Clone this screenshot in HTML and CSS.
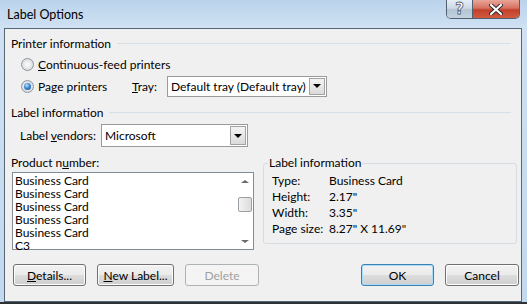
FILE: index.html
```html
<!DOCTYPE html>
<html lang="en">
<head>
  <meta charset="UTF-8" />
  <title>Label Options</title>
  <link rel="stylesheet" href="styles.css">
</head>
<body>
  <div class="window">
    <div class="titlebar">
      <span class="title">Label Options</span>
      <div class="caption">
        <span class="cap-btn help">?</span>
        <span class="cap-btn close">
          <svg width="14" height="11" viewBox="0 0 14 11">
            <path d="M2 1 L12 10 M12 1 L2 10" stroke="#2b2b2b" stroke-width="4" stroke-linecap="round"/>
            <path d="M2 1 L12 10 M12 1 L2 10" stroke="#ffffff" stroke-width="2.2" stroke-linecap="round"/>
          </svg>
        </span>
      </div>
    </div>

    <div class="client">
      <div class="group-head"><span>Printer information</span><i class="rule"></i></div>

      <div class="radio-row first">
        <span class="radio"></span>
        <span><u>C</u>ontinuous-feed printers</span>
      </div>
      <div class="radio-row second">
        <div class="radio-opt">
          <span class="radio checked"></span>
          <span>Pa<u>g</u>e printers</span>
        </div>
        <span class="tray-label"><u>T</u>ray:</span>
        <div class="select tray">
          <span class="select-text">Default tray (Default tray)</span>
          <span class="drop"><i></i></span>
        </div>
      </div>

      <div class="group-head label-head"><span>Label information</span><i class="rule"></i></div>

      <div class="vendor-row">
        <span class="vendor-label">Label <u>v</u>endors:</span>
        <div class="select vendor">
          <span class="select-text">Microsoft</span>
          <span class="drop"><i></i></span>
        </div>
      </div>

      <div class="columns">
        <div class="product">
          <div class="product-label">Product n<u>u</u>mber:</div>
          <div class="listbox">
            <ul class="items">
              <li>Business Card</li>
              <li>Business Card</li>
              <li>Business Card</li>
              <li>Business Card</li>
              <li>Business Card</li>
              <li>C3</li>
            </ul>
            <div class="scrollbar">
              <span class="arrow up"></span>
              <span class="thumb"></span>
              <span class="arrow down"></span>
            </div>
          </div>
        </div>

        <fieldset class="info-box">
          <legend>Label information</legend>
          <table class="info">
            <tr><td>Type:</td><td>Business Card</td></tr>
            <tr><td>Height:</td><td>2.17"</td></tr>
            <tr><td>Width:</td><td>3.35"</td></tr>
            <tr><td>Page size:</td><td>8.27" X 11.69"</td></tr>
          </table>
        </fieldset>
      </div>

      <div class="buttons">
        <button class="btn details"><u>D</u>etails...</button>
        <button class="btn new-label"><u>N</u>ew Label...</button>
        <button class="btn delete" disabled>Delete</button>
        <span class="spacer"></span>
        <button class="btn ok">OK</button>
        <button class="btn cancel">Cancel</button>
      </div>
    </div>

    <div class="taskbar"></div>
  </div>
</body>
</html>
```

FILE: styles.css
```css
body {
  margin: 0;
  font-family: Lato, "Open Sans", sans-serif;
  font-size: 12px;
  line-height: 15px;
  color: #000;
}

u {
  text-decoration: underline;
  text-underline-offset: 1px;
}

.window {
  width: 527px;
  height: 304px;
  overflow: hidden;
  display: flex;
  flex-direction: column;
  background: linear-gradient(to bottom, #bad3eb 0%, #cfe1f3 9%, #c2d8ee 100%);
  white-space: nowrap;
}

/* title bar */
.titlebar {
  height: 28px;
  display: flex;
  align-items: flex-start;
  flex-shrink: 0;
}

.title {
  padding: 7px 0 0 7px;
  line-height: 16px;
  font-size: 12.5px;
}

.caption {
  margin-left: auto;
  margin-right: 7px;
  display: flex;
  height: 18px;
  border: 1px solid #50606f;
  border-top: none;
  border-radius: 0 0 5px 5px;
  overflow: hidden;
}

.cap-btn {
  display: flex;
  align-items: center;
  justify-content: center;
}

.help {
  width: 25px;
  border-right: 1px solid #50606f;
  background: linear-gradient(to bottom, #e6eef6 0%, #cdd9e5 45%, #b4c4d4 55%, #c4d2df 100%);
  color: #fff;
  font: bold 15px "DejaVu Sans", sans-serif;
  -webkit-text-stroke: 0.8px #55606a;
}

.close {
  width: 46px;
  background: linear-gradient(to bottom, #e7a69a 0%, #d6705f 45%, #c2412c 55%, #d25a40 100%);
}

/* client area */
.client {
  height: 265px;
  margin: 0 5px 0 4px;
  border: 1px solid #566778;
  background: #f0f0f0;
  padding: 7px 0 0 6px;
  display: flex;
  flex-direction: column;
  flex-shrink: 0;
}

.group-head {
  display: flex;
  align-items: center;
  gap: 6px;
  height: 15px;
  margin-right: 10px;
}

.rule {
  flex: 1;
  height: 1px;
  background: #d8e0e7;
}

.radio-row {
  display: flex;
  align-items: center;
  padding-left: 10px;
}

.radio-row.first {
  height: 20px;
  margin-top: 3px;
}

.radio-row.second {
  height: 22px;
  margin-top: 1px;
}

.radio-opt {
  display: flex;
  align-items: center;
  width: 111px;
}

.radio {
  width: 11px;
  height: 11px;
  border: 1px solid #8a98a4;
  border-radius: 50%;
  background: radial-gradient(circle at 50% 50%, #f6f6f6 20%, #dcdcdc 70%, #c9c9c9 100%);
  margin-right: 4px;
  position: relative;
  flex-shrink: 0;
}

.radio.checked::after {
  content: "";
  position: absolute;
  left: 2px;
  top: 2px;
  width: 7px;
  height: 7px;
  border-radius: 50%;
  background: radial-gradient(circle at 40% 35%, #bfe4fb 0%, #3b8bd0 45%, #154c8a 100%);
}

.tray-label {
  width: 35px;
}

/* combo boxes */
.select {
  display: flex;
  align-items: center;
  border: 1px solid #9a9a9a;
  background: #fff;
  box-sizing: border-box;
  padding: 1px;
}

.select-text {
  flex: 1;
  padding-left: 2px;
  overflow: hidden;
}

.drop {
  width: 16px;
  align-self: stretch;
  border: 1px solid #a2a2a2;
  background: linear-gradient(to bottom, #f4f4f4, #dadada);
  display: flex;
  align-items: center;
  justify-content: center;
  box-sizing: border-box;
}

.drop i {
  width: 0;
  height: 0;
  border-left: 4px solid transparent;
  border-right: 4px solid transparent;
  border-top: 4px solid #000;
}

.tray {
  width: 160px;
  height: 21px;
}

.label-head {
  margin-top: 8px;
}

.vendor-row {
  display: flex;
  align-items: center;
  margin-top: 4px;
  padding-left: 9px;
}

.vendor-label {
  width: 81px;
}

.vendor {
  width: 147px;
  height: 23px;
}

/* lower columns */
.columns {
  display: flex;
  gap: 9px;
  margin-top: 8px;
}

.product {
  width: 242px;
  margin-left: 1px;
}

.product-label {
  height: 15px;
  margin-left: -1px;
}

.listbox {
  margin-top: 2px;
  height: 78px;
  border: 1px solid #838b94;
  background: #fff;
  box-sizing: border-box;
  display: flex;
}

.items {
  list-style: none;
  margin: 0;
  padding: 1px 0 0 2px;
  flex: 1;
  line-height: 13px;
}

.scrollbar {
  width: 17px;
  display: flex;
  flex-direction: column;
  align-items: center;
  background: #fff;
}

.arrow {
  width: 0;
  height: 0;
  border-left: 4px solid transparent;
  border-right: 4px solid transparent;
}

.arrow.up {
  margin-top: 7px;
  border-bottom: 3px solid #6b6b6b;
}

.arrow.down {
  margin-top: auto;
  margin-bottom: 6px;
  border-top: 3px solid #6b6b6b;
}

.thumb {
  width: 14px;
  height: 15px;
  margin-top: 14px;
  border: 1px solid #9aa0a6;
  border-radius: 2px;
  box-sizing: border-box;
  background: linear-gradient(to right, #f3f3f3, #dcdcdc);
}

.info-box {
  width: 254px;
  height: 88px;
  margin: 0;
  margin-top: 1px;
  padding: 0 0 0 8px;
  border: 1px solid #d5dde3;
  border-radius: 3px;
  box-sizing: border-box;
}

.info-box legend {
  padding: 0 1px;
  margin-left: -4px;
  line-height: 14px;
}

.info {
  border-collapse: collapse;
  margin-top: 3px;
}

.info td {
  padding: 0;
  height: 16px;
  line-height: 16px;
}

.info td:first-child {
  width: 57px;
}

/* bottom buttons */
.buttons {
  display: flex;
  margin-top: 14px;
  padding-left: 2px;
  padding-right: 2px;
  gap: 11px;
}

.spacer {
  flex: 1;
}

.btn {
  height: 22px;
  padding: 0;
  font: inherit;
  color: #000;
  border: 1px solid #707070;
  border-radius: 3px;
  background: linear-gradient(to bottom, #f2f2f2 0%, #ebebeb 50%, #dddddd 51%, #cfcfcf 100%);
  box-shadow: inset 0 0 0 1px #fcfcfc;
}

.details {
  width: 73px;
}

.new-label {
  width: 77px;
}

.delete {
  width: 74px;
  color: #a0a0a0;
  border-color: #adb2b5;
  background: #f4f4f4;
  box-shadow: none;
}

.ok {
  width: 73px;
  border-color: #3c7fb1;
  box-shadow: inset 0 0 0 1px #a8dcf8;
}

.cancel {
  width: 74px;
}

.taskbar {
  margin-top: auto;
  height: 4px;
  background: #2d3136;
}
```
